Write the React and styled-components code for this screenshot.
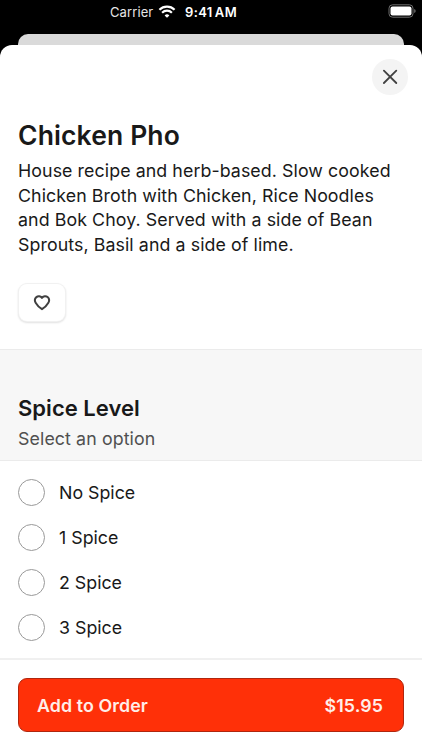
import React from "react";
import styled, { createGlobalStyle } from "styled-components";

const Global = createGlobalStyle`
  * { box-sizing: border-box; }
  body { margin: 0; background: #000; font-family: Inter, "Liberation Sans", sans-serif; color: #191919; }
  h1, h2, p { margin: 0; }
  button { font: inherit; color: inherit; border: 0; padding: 0; cursor: pointer; }
`;
const Screen = styled.div`
  width: 422px; height: 750px; overflow: hidden; background: #000;
  display: flex; flex-direction: column;
`;
const StatusBar = styled.header`
  height: 34px; flex: none; padding: 4px 6px 0 110px; color: #fff;
  display: flex; align-items: flex-start; font-size: 13px; line-height: 16px;
`;
const Carrier = styled.span`color: #e6e6e6; letter-spacing: 0.1px; width: 48px; white-space: nowrap;`;
const Wifi = styled.svg`margin-top: 1px;`;
const Clock = styled.span`margin-left: 9px; font-weight: 600; letter-spacing: 0.35px; word-spacing: -1.4px; white-space: nowrap;`;
const Battery = styled.svg`margin-left: auto;`;
const Backdrop = styled.div`
  height: 11px; flex: none; margin: 0 18px; background: #dadada; border-radius: 10px 10px 0 0;
`;
const Sheet = styled.main`
  flex: 1; background: #fff; border-radius: 12px 12px 0 0; display: flex; flex-direction: column;
`;
const SheetTop = styled.div`
  height: 74px; padding: 14px 14px 0; display: flex; justify-content: flex-end;
`;
const CloseButton = styled.button`
  width: 36px; height: 36px; border-radius: 50%; background: #f4f4f4;
  display: grid; place-items: center;
`;
const Details = styled.section`height: 230px; padding: 0 18px;`;
const Title = styled.h1`font-size: 26.5px; line-height: 32px; font-weight: 600; letter-spacing: 0.12px;`;
const Description = styled.p`
  margin-top: 8px; font-size: 17.8px; line-height: 24.7px; letter-spacing: 0.08px; white-space: nowrap;
`;
const LikeButton = styled.button`
  margin: 26.2px 0 0 1px; width: 46px; height: 37px; background: #fff; border-radius: 8px;
  box-shadow: 0 0 0 1px #f1f1f1, 0 1px 2px 1px rgba(0, 0, 0, 0.12); display: grid; place-items: center;
`;
const OptionHeader = styled.section`
  height: 112px; background: #f7f7f7; border: solid #ebebeb; border-width: 1px 0; padding: 45px 18px 0;
`;
const OptionTitle = styled.h2`font-size: 22px; line-height: 27px; font-weight: 600; letter-spacing: 0.03px;`;
const OptionHint = styled.p`
  margin-top: 6px; font-size: 17.8px; line-height: 22px; letter-spacing: 0.1px; color: #505050;
`;
const Options = styled.div`height: 197px; padding: 9px 18px 0;`;
const Option = styled.label`
  height: 45px; display: flex; align-items: center; gap: 14px; font-size: 17.8px;
`;
const Radio = styled.input`
  appearance: none; width: 27px; height: 27px; margin: 0; border: 1px solid #999; border-radius: 50%;
`;
const Footer = styled.footer`border-top: 2px solid #f0f0f0; padding: 18px 18px 0;`;
const OrderButton = styled.button`
  width: 100%; height: 54px; padding: 0 20px 0 18px; border: 1px solid #b0260e; border-radius: 9px;
  background: #ff3008; color: #ffeee9; display: flex; align-items: center; justify-content: space-between;
  font-size: 17.8px; font-weight: 600; letter-spacing: 0.1px;
`;

const LEVELS = ["No Spice", "1 Spice", "2 Spice", "3 Spice"];

export default function App() {
  return (
    <Screen>
      <Global />
      <StatusBar>
        <Carrier>Carrier</Carrier>
        <Wifi width="18" height="14" viewBox="0 0 18 14" fill="none" stroke="#fff" strokeWidth="2.2">
          <path d="M1.4 4.7a11 11 0 0 1 15.2 0M4.1 7.7a7 7 0 0 1 9.8 0" />
          <path d="M9 12.8 6.6 10.4a3.5 3.5 0 0 1 4.8 0Z" fill="#fff" stroke="none" />
        </Wifi>
        <Clock>9:41 AM</Clock>
        <Battery width="28" height="14" viewBox="0 0 28 14">
          <rect x="1" y=".8" width="24" height="12.4" rx="3.5" fill="none" stroke="#6d6d6d" />
          <rect x="2.5" y="2.5" width="21" height="9" rx="2" fill="#fff" />
          <path d="M26.2 5q1.5.6 1.5 2t-1.5 2Z" fill="#6d6d6d" />
        </Battery>
      </StatusBar>
      <Backdrop />
      <Sheet>
        <SheetTop>
          <CloseButton aria-label="Close">
            <svg width="16" height="16" viewBox="0 0 16 16" stroke="#414141" strokeWidth="1.8" strokeLinecap="round">
              <path d="m1.9 1.6 12.4 12.4M14.3 1.6 1.9 14" />
            </svg>
          </CloseButton>
        </SheetTop>
        <Details>
          <Title>Chicken Pho</Title>
          <Description>
            House recipe and herb-based. Slow cooked<br />Chicken Broth with Chicken, Rice Noodles<br />
            and Bok Choy. Served with a side of Bean<br />Sprouts, Basil and a side of lime.
          </Description>
          <LikeButton aria-label="Save item">
            <svg width="18" height="16" viewBox="0 0 18 16" fill="none" stroke="#414141" strokeWidth="2" strokeLinejoin="round">
              <path d="M9 2.9C7.4 1 5 .8 3.4 2.1 1.6 3.6 1.6 6 2.8 8c1.1 1.9 3.8 4.7 6.2 6.2 2.4-1.5 5.1-4.3 6.2-6.2 1.2-2 1.2-4.4-.6-5.9C13 .8 10.6 1 9 2.9Z" />
            </svg>
          </LikeButton>
        </Details>
        <OptionHeader>
          <OptionTitle>Spice Level</OptionTitle>
          <OptionHint>Select an option</OptionHint>
        </OptionHeader>
        <Options>
          {LEVELS.map((level) => (
            <Option key={level}><Radio type="radio" name="spice" />{level}</Option>
          ))}
        </Options>
        <Footer>
          <OrderButton><span>Add to Order</span><span>$15.95</span></OrderButton>
        </Footer>
      </Sheet>
    </Screen>
  );
}
